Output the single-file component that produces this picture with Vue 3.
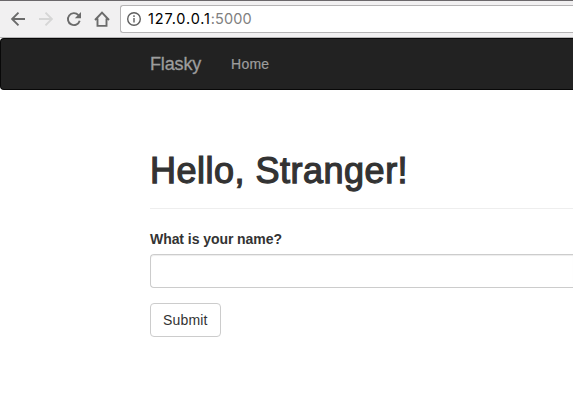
<script setup>
const host = '127.0.0.1'
const port = ':5000'
</script>

<template>
  <div class="window">
    <div class="toolbar">
      <svg class="icon" viewBox="0 0 16 16"><path d="M15 8H2M8.5 1.6 2.1 8l6.4 6.4" /></svg>
      <svg class="icon disabled" viewBox="0 0 16 16"><path d="M1 8h13M7.5 1.6 13.9 8l-6.4 6.4" /></svg>
      <svg class="icon" viewBox="0 0 16 16">
        <path d="M12.4 4.1A6 6 0 1 0 13.7 9.8" />
        <path class="solid" d="M15 1v6.2H8.8z" />
      </svg>
      <svg class="icon" viewBox="0 0 16 16"><path d="M1 9 8 1.6 15 9M3.5 7.5v7.4h9V7.5" /></svg>
      <div class="address">
        <svg class="info" viewBox="0 0 14 14">
          <circle cx="7" cy="7" r="6.3" />
          <path d="M7 6v4.5M7 3.3v1.7" />
        </svg>
        <span class="url">{{ host }}<span class="port">{{ port }}</span></span>
      </div>
    </div>
    <nav class="navbar">
      <a class="brand">Flasky</a>
      <a class="link">Home</a>
    </nav>
    <main class="container">
      <h1>Hello, Stranger!</h1>
      <form @submit.prevent>
        <label for="name">What is your name?</label>
        <input id="name" type="text" />
        <button type="submit">Submit</button>
      </form>
    </main>
  </div>
</template>

<style>
body {
  margin: 0;
  background: #fff;
}
</style>

<style scoped>
.window {
  height: 404px;
  overflow: hidden;
  font: 14px/20px "Liberation Sans", Arial, sans-serif;
  color: #333;
}
.window * {
  box-sizing: border-box;
}
.toolbar {
  display: flex;
  align-items: center;
  gap: 12px;
  height: 38px;
  padding-left: 10px;
  background: #f1f0f1;
  border-top: 1px solid #6b686b;
  border-bottom: 1px solid #b6b5b6;
}
.icon {
  flex: none;
  width: 16px;
  height: 16px;
  fill: none;
  stroke: #6b6b6b;
  stroke-width: 1.9;
}
.icon .solid {
  fill: #6b6b6b;
  stroke: none;
}
.icon.disabled {
  stroke: #d6d6d6;
}
.address {
  display: flex;
  align-items: center;
  flex: 1;
  height: 28px;
  margin-left: -2px;
  padding-left: 6px;
  background: #fff;
  border: 1px solid #b5b4b5;
  border-right: 0;
  border-radius: 3px 0 0 3px;
}
.info {
  width: 14px;
  height: 14px;
  fill: none;
  stroke: #5f5f5f;
  stroke-width: 1.4;
}
.url {
  margin-left: 7px;
  font: 14.5px/20px Inter, sans-serif;
  letter-spacing: 0.85px;
  color: #000;
}
.port {
  letter-spacing: 0.1px;
  color: #808080;
}
.navbar {
  display: flex;
  align-items: center;
  height: 52px;
  padding-left: 149px;
  background: #222;
  border: 1px solid #080808;
  border-right: 0;
  border-radius: 4px 0 0 4px;
  color: #9d9d9d;
}
.brand {
  font-size: 18px;
  letter-spacing: -0.15px;
  -webkit-text-stroke: 0.3px #9d9d9d;
}
.link {
  margin-left: 30px;
  letter-spacing: 0.2px;
  -webkit-text-stroke: 0.2px #9d9d9d;
}
.container {
  padding: 61px 0 0 150px;
}
h1 {
  height: 58px;
  margin: 0 0 20px;
  border-bottom: 1px solid #eee;
  font-size: 36px;
  font-weight: 400;
  line-height: 40px;
  letter-spacing: 0.5px;
  -webkit-text-stroke: 1.25px #333;
  white-space: nowrap;
}
form {
  display: flex;
  flex-direction: column;
  align-items: flex-start;
}
label {
  margin-bottom: 5px;
  font-weight: 700;
  letter-spacing: -0.06px;
}
input {
  width: 100%;
  height: 34px;
  margin-bottom: 15px;
  border: 1px solid #ccc;
  border-right: 0;
  border-radius: 4px 0 0 4px;
  box-shadow: inset 0 1px 1px rgba(0, 0, 0, 0.075);
}
button {
  height: 34px;
  padding: 0 12px;
  background: #fff;
  border: 1px solid #ccc;
  border-radius: 4px;
  font: inherit;
  letter-spacing: 0.17px;
  color: #333;
}
</style>
